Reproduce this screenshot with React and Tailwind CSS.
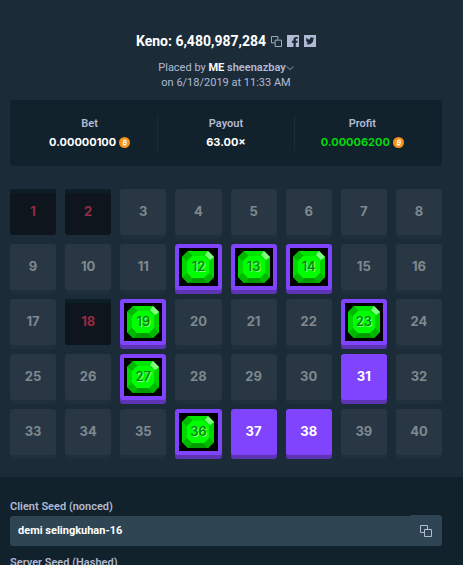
import React from "react";

const hits = [12, 13, 14, 19, 23, 27, 36];
const picked = [31, 37, 38];
const misses = [1, 2, 18];

const CopyIcon = ({ className }) => (
  <svg viewBox="0 0 12 12" className={className} fill="none" stroke="currentColor" aria-hidden="true">
    <path d="M4 7.5H.5v-7h7V4" />
    <path d="M4.5 4.5h7v7h-7z" />
  </svg>
);

const FacebookIcon = () => (
  <svg viewBox="0 0 12 12" className="w-3 h-3" aria-hidden="true">
    <path
      fill="currentColor"
      fillRule="evenodd"
      d="M0 0h12v12H8.800V7.700h1.600l.3-2H8.800V4.700c0-.6.2-.9.900-.9h1.100V2.100C10.300 2 9.800 2 9.200 2 7.500 2 6.500 2.900 6.500 4.500v1.200H4.900v2h1.600V12H0z"
    />
  </svg>
);

const TwitterIcon = () => (
  <svg viewBox="0 0 12 12" className="w-3 h-3" aria-hidden="true">
    <path fill="currentColor" d="M0 0h12v12H0z" />
    <path
      fill="#1b2c38"
      d="M10.300 3.200c-.3.150-.65.250-1 .3.360-.22.640-.56.770-.97-.34.200-.71.350-1.110.430A1.760 1.760 0 0 0 5.900 4.600c-1.460-.07-2.760-.77-3.630-1.840-.46.800-.24 1.830.54 2.350-.29 0-.56-.09-.8-.22 0 .84.600 1.580 1.410 1.750-.25.070-.52.080-.79.030.22.700.87 1.210 1.640 1.220A3.530 3.530 0 0 1 1.700 8.600a4.960 4.960 0 0 0 7.700-4.400c.36-.26.660-.6.900-1z"
    />
  </svg>
);

const BitcoinIcon = () => (
  <svg viewBox="0 0 12 12" className="w-[11px] h-[11px]" aria-hidden="true">
    <circle cx="6" cy="6" r="6" fill="#f7931a" />
    <g transform="rotate(13 6 6)" fill="none" stroke="#fff">
      <path strokeWidth="1.100" d="M4.600 3.700h2a1.050 1.050 0 0 1 0 2.200H4.600M4.600 5.900h2.300a1.150 1.150 0 0 1 0 2.400H4.600M4.800 3.500v5" />
      <path strokeWidth=".7" d="M5.500 2.500v1.200M6.800 2.500v1.200M5.500 8.300v1.200M6.800 8.300v1.200" />
    </g>
  </svg>
);

const Gem = () => (
  <svg viewBox="0 0 32 32" className="w-8 h-8" aria-hidden="true">
    <path fill="#00e600" d="M6 0h20l6 6v20l-6 6H6l-6-6V6z" />
    <path fill="#00b800" d="M6 0 0 6l5 5 6-6zM0 26l6 6 5-5-6-6z" />
    <path fill="#00d900" d="M0 6l5 5v10l-5 5z" />
    <path fill="#009c00" d="M6 32l5-5h10l5 5z" />
    <path fill="#00b800" d="M26 32l6-6-5-5-6 6z" />
    <path fill="#00d400" d="M32 6l-5 5v10l5 5z" />
    <path fill="#00ff00" d="M10 5h12l5 5v12l-5 5H10l-5-5V10z" />
    <path fill="#80ff80" d="M26 0l6 6-4 3-5-5z" />
  </svg>
);

const Tile = ({ number }) => {
  const base =
    "w-full h-[46px] rounded-[3px] flex items-center justify-center font-['Inter',sans-serif] text-[13px] font-bold";

  if (hits.includes(number)) {
    return (
      <button className={`${base} relative border-4 border-[#8044ff] bg-black shadow-[0_4px_0_#5c34b4]`}>
        <Gem />
        <span className="absolute inset-0 flex items-center justify-center font-medium text-[#00800c] [text-shadow:1px_1px_0_#80ff80]">
          {number}
        </span>
      </button>
    );
  }
  if (picked.includes(number)) {
    return <button className={`${base} bg-[#8044ff] text-white shadow-[0_4px_0_#5c34b4]`}>{number}</button>;
  }
  if (misses.includes(number)) {
    return (
      <button className={`${base} bg-[#0e151c] text-[#962b46] shadow-[inset_0_4px_0_#0c1d26]`}>{number}</button>
    );
  }
  return <button className={`${base} bg-[#283743] text-[#7e8990] shadow-[0_4px_0_#1e303c]`}>{number}</button>;
};

const Stat = ({ label, children }) => (
  <div className="flex-1 h-9 flex flex-col items-center justify-center gap-1">
    <span className="text-[11px] leading-[14px] font-semibold">{label}</span>
    <span className="flex items-center gap-[3px] font-['Inter',sans-serif] text-[11px] leading-[14px] font-bold text-white">
      {children}
    </span>
  </div>
);

const Seed = ({ id, label, value }) => (
  <div>
    <label htmlFor={id} className="block text-[11px] leading-4 font-semibold">
      {label}
    </label>
    <div className="flex items-end">
      <input
        id={id}
        readOnly
        value={value}
        className="flex-1 min-w-0 h-[30px] rounded-l-[3px] bg-[#2f4553] px-2 pb-[2px] text-[11px] font-bold text-white outline-none"
      />
      <button aria-label="Copy" className="w-8 h-[31px] rounded-r-[3px] bg-[#2f4553] flex items-center justify-center">
        <CopyIcon className="w-3 h-3" />
      </button>
    </div>
  </div>
);

const App = () => {
  return (
    <div className="h-screen overflow-hidden flex flex-col bg-[#1b2c38] font-['Roboto',sans-serif] font-medium text-[#b1bad3]">
      <main className="pl-[10px] pr-[21px] pt-8 pb-[22px]">
        {/* Bet title */}
        <div className="flex items-center justify-center gap-[5px]">
          <h1 className="text-[14px] leading-[18px] font-bold text-white">Keno: 6,480,987,284</h1>
          <button aria-label="Copy bet id">
            <CopyIcon className="w-[11px] h-[11px]" />
          </button>
          <a href="#facebook" aria-label="Facebook">
            <FacebookIcon />
          </a>
          <a href="#twitter" aria-label="Twitter">
            <TwitterIcon />
          </a>
        </div>

        <div className="mt-[10px] text-center text-[11px] leading-[15px] font-normal">
          <p className="flex items-center justify-center">
            <span>
              Placed by <b className="font-bold text-white">ME</b> <b className="font-semibold">sheenazbay</b>
            </span>
            <svg viewBox="0 0 8 6" className="w-2 h-[6px]" fill="none" stroke="#5b6b7c" strokeWidth="1.500" aria-hidden="true">
              <path d="M.5 1.500 4 4.500l3.500-3" />
            </svg>
          </p>
          <p>on 6/18/2019 at 11:33 AM</p>
        </div>

        {/* Bet stats */}
        <section className="mt-[10px] h-[66px] px-3 flex items-center rounded-[3px] bg-[#12222c] divide-x divide-[#1b2c38]">
          <Stat label="Bet">
            0.00000100 <BitcoinIcon />
          </Stat>
          <Stat label="Payout">63.00×</Stat>
          <Stat label="Profit">
            <span className="text-[#00d90c]">0.00006200</span> <BitcoinIcon />
          </Stat>
        </section>

        {/* Board */}
        <section className="mt-[23px] grid grid-cols-8 gap-[9px]">
          {Array.from({ length: 40 }, (_, i) => (
            <Tile key={i} number={i + 1} />
          ))}
        </section>
      </main>

      {/* Seeds */}
      <section className="flex-1 pl-[10px] pr-[21px] pt-[22px] flex flex-col gap-[9px] bg-[#12222c]">
        <Seed id="client-seed" label="Client Seed (nonced)" value="demi selingkuhan-16" />
        <Seed id="server-seed" label="Server Seed (Hashed)" value="" />
      </section>
    </div>
  );
};

export default App;
